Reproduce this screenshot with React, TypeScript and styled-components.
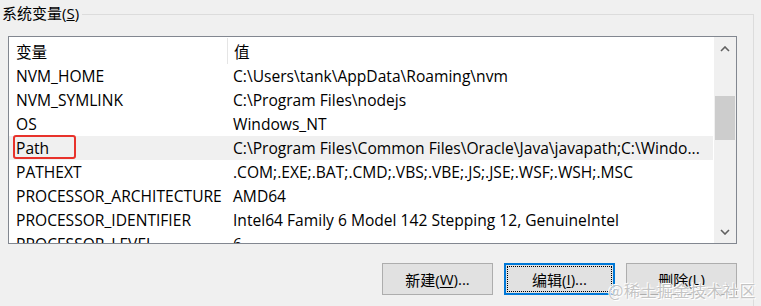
import React from 'react'
import styled, { createGlobalStyle } from 'styled-components'

const GlobalStyle = createGlobalStyle`
  html, body {
    margin: 0;
    padding: 0;
    background: #f0f0f0;
  }
  body {
    font-family: "Open Sans", "Noto Sans CJK SC", sans-serif;
    color: #000;
  }
`

const Page = styled.div`
  position: relative;
  width: 761px;
  height: 306px;
  overflow: hidden;
  background: #f0f0f0;
`

const Group = styled.div`
  display: flex;
  flex-direction: column;
  width: 754px;
`

const GroupHead = styled.div`
  display: flex;
  height: 22px;
`

const GroupLabel = styled.span`
  padding: 5px 0 0 2px;
  font-size: 15px;
  line-height: 16px;
  color: #000;
`

const GroupRule = styled.div`
  flex: 1;
  margin: 14px 0 0 3px;
  border-top: 1px solid #dcdcdc;
  border-right: 1px solid #dcdcdc;
`

const GroupBody = styled.div`
  display: flex;
  flex-direction: column;
  padding: 14px 16px 0 8px;
  height: 284px;
  box-sizing: border-box;
  border-right: 1px solid #dcdcdc;
`

const ListBox = styled.div`
  display: flex;
  height: 208px;
  box-sizing: border-box;
  border: 1px solid #828790;
  background: #fff;
  overflow: hidden;
`

const ListContent = styled.div`
  flex: 1;
  display: flex;
  flex-direction: column;
  min-width: 0;
`

const HeaderRow = styled.div`
  display: grid;
  grid-template-columns: 218px 1fr;
  height: 27px;
  flex-shrink: 0;
`

const HeaderCell = styled.div<{ $divider?: boolean }>`
  display: flex;
  align-items: center;
  padding-left: ${p => (p.$divider ? '6px' : '7px')};
  margin-top: 1px;
  font-size: 15.6px;
  border-left: ${p => (p.$divider ? '1px solid #e5e5e5' : 'none')};
`

const Row = styled.div<{ $selected?: boolean }>`
  display: grid;
  grid-template-columns: 218px 1fr;
  height: 24px;
  flex-shrink: 0;
  background: ${p => (p.$selected ? '#f0f0f0' : 'transparent')};
`

const Cell = styled.div<{ $value?: boolean }>`
  position: relative;
  display: flex;
  align-items: center;
  padding-left: ${p => (p.$value ? '6px' : '7px')};
  font-size: 15.6px;
  white-space: nowrap;
  overflow: visible;
`

const Highlight = styled.span`
  position: absolute;
  left: 4px;
  top: -1px;
  width: 63px;
  height: 24px;
  box-sizing: border-box;
  border: 2px solid #e8322b;
  border-radius: 3px;
`

const ScrollBar = styled.div`
  width: 22px;
  display: flex;
  flex-direction: column;
  background: #f0f0f0;
  border-left: 1px solid #fff;
`

const ScrollArrow = styled.div<{ $h: number }>`
  height: ${p => p.$h}px;
  display: flex;
  align-items: center;
  justify-content: center;
`

const Track = styled.div`
  flex: 1;
`

const Thumb = styled.div`
  margin: 0 1px;
  height: 44px;
  background: #cdcdcd;
`

const ButtonRow = styled.div`
  display: flex;
  justify-content: flex-end;
  gap: 11px;
  margin-top: 19px;
`

const Button = styled.div<{ $focused?: boolean }>`
  position: relative;
  width: 111px;
  height: 32px;
  box-sizing: border-box;
  display: flex;
  align-items: center;
  justify-content: center;
  font-size: 15px;
  background: #e1e1e1;
  border: ${p => (p.$focused ? '2px solid #0078d7' : '1px solid #adadad')};
  outline: ${p => (p.$focused ? '1px dotted #000' : 'none')};
  outline-offset: -4px;
  u {
    text-decoration: underline;
    text-underline-offset: 2px;
  }
`

const Watermark = styled.div`
  position: absolute;
  right: 5px;
  bottom: 4px;
  font-family: "Noto Sans CJK SC", sans-serif;
  font-size: 16px;
  color: #c4c4c4;
  letter-spacing: 0.5px;
  text-shadow: 0 0 1px #fff, 1px 1px 0 #fff, -1px -1px 0 #fff;
`

function Chevron({ up }: { up?: boolean }) {
  return (
    <svg width="10" height="6" viewBox="0 0 10 6">
      <polyline
        points={up ? '1,5 5,1 9,5' : '1,1 5,5 9,1'}
        fill="none"
        stroke="#606060"
        strokeWidth="1.6"
      />
    </svg>
  )
}

const rows = [
  { name: 'NVM_HOME', value: 'C:\\Users\\tank\\AppData\\Roaming\\nvm' },
  { name: 'NVM_SYMLINK', value: 'C:\\Program Files\\nodejs' },
  { name: 'OS', value: 'Windows_NT' },
  { name: 'Path', value: 'C:\\Program Files\\Common Files\\Oracle\\Java\\javapath;C:\\Windo...', selected: true },
  { name: 'PATHEXT', value: '.COM;.EXE;.BAT;.CMD;.VBS;.VBE;.JS;.JSE;.WSF;.WSH;.MSC' },
  { name: 'PROCESSOR_ARCHITECTURE', value: 'AMD64' },
  { name: 'PROCESSOR_IDENTIFIER', value: 'Intel64 Family 6 Model 142 Stepping 12, GenuineIntel' },
  { name: 'PROCESSOR_LEVEL', value: '6' },
]

export default function App() {
  return (
    <Page>
      <GlobalStyle />
      <Group>
        <GroupHead>
          <GroupLabel>系统变量(<u>S</u>)</GroupLabel>
          <GroupRule />
        </GroupHead>
        <GroupBody>
          <ListBox>
            <ListContent>
              <HeaderRow>
                <HeaderCell>变量</HeaderCell>
                <HeaderCell $divider>值</HeaderCell>
              </HeaderRow>
              {rows.map(r => (
                <Row key={r.name} $selected={r.selected}>
                  <Cell>
                    {r.name}
                    {r.selected && <Highlight />}
                  </Cell>
                  <Cell $value>{r.value}</Cell>
                </Row>
              ))}
            </ListContent>
            <ScrollBar>
              <ScrollArrow $h={24}>
                <Chevron up />
              </ScrollArrow>
              <Track>
                <Thumb style={{ marginTop: 35 }} />
              </Track>
              <ScrollArrow $h={22}>
                <Chevron />
              </ScrollArrow>
            </ScrollBar>
          </ListBox>
          <ButtonRow>
            <Button>新建(<u>W</u>)...</Button>
            <Button $focused>编辑(<u>I</u>)...</Button>
            <Button>删除(<u>L</u>)</Button>
          </ButtonRow>
        </GroupBody>
      </Group>
      <Watermark>@稀土掘金技术社区</Watermark>
    </Page>
  )
}
